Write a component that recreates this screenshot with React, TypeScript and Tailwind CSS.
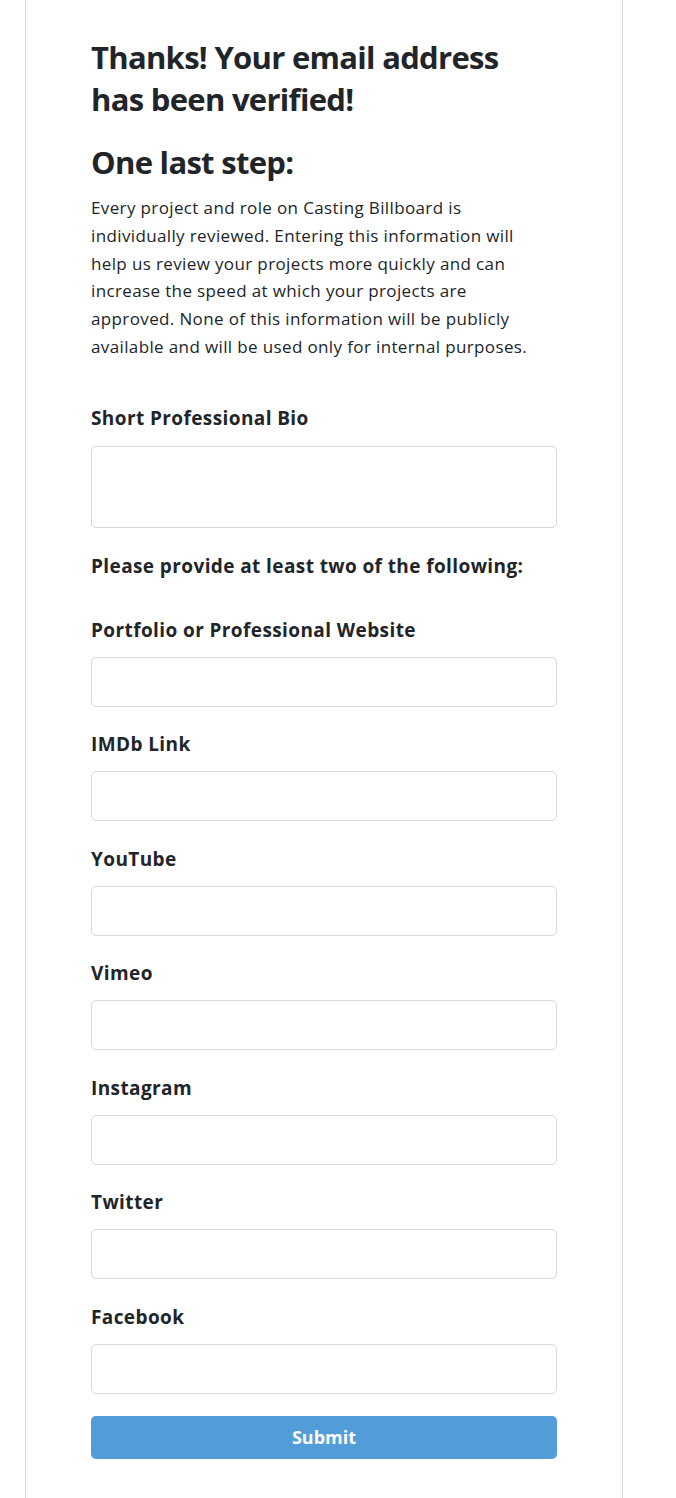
import React from "react";

const fields = [
  "Portfolio or Professional Website",
  "IMDb Link",
  "YouTube",
  "Vimeo",
  "Instagram",
  "Twitter",
  "Facebook",
];

export default function App() {
  return (
    <div
      className="min-h-[1498px] w-full bg-white text-[#212529]"
      style={{ fontFamily: '"Open Sans", "Noto Sans", sans-serif' }}
    >
      <div className="ml-[25px] w-[598px] min-h-[1498px] border-x border-[#dcdcdc] px-[65px] pt-[36px] pb-[39px]">
        <h1 className="text-[31px] leading-[42px] font-bold tracking-[-0.7px]">
          Thanks! Your email address has been verified!
        </h1>
        <h2 className="mt-[21px] text-[31px] leading-[42px] font-bold tracking-[-0.7px]">
          One last step:
        </h2>
        <p className="mt-[11px] text-[17px] leading-[27.8px] tracking-[0.37px] whitespace-nowrap">
          Every project and role on Casting Billboard is
          <br />
          individually reviewed. Entering this information will
          <br />
          help us review your projects more quickly and can
          <br />
          increase the speed at which your projects are
          <br />
          approved. None of this information will be publicly
          <br />
          available and will be used only for internal purposes.
        </p>
        <div className="mt-[44px]">
          <label className="block text-[19px] leading-[27px] font-bold tracking-[0.4px]">
            Short Professional Bio
          </label>
          <textarea className="mt-[14px] block h-[82px] w-full resize-none rounded-[5px] border border-[#d6d6d6] bg-white" />
        </div>
        <div className="mt-[25px] text-[19px] leading-[27px] font-bold tracking-[0.4px]">
          Please provide at least two of the following:
        </div>
        <div className="mt-[37px] flex flex-col gap-[24.5px]">
          {fields.map((f) => (
            <div key={f}>
              <label className="block text-[19px] leading-[27px] font-bold tracking-[0.4px]">
                {f}
              </label>
              <input
                type="text"
                className="mt-[13px] block h-[50px] w-full rounded-[5px] border border-[#d9d9d9] bg-white"
              />
            </div>
          ))}
        </div>
        <button className="mt-[22px] h-[43px] w-full rounded-[5px] bg-[#529dd8] text-[18px] font-bold text-white">
          Submit
        </button>
      </div>
    </div>
  );
}
